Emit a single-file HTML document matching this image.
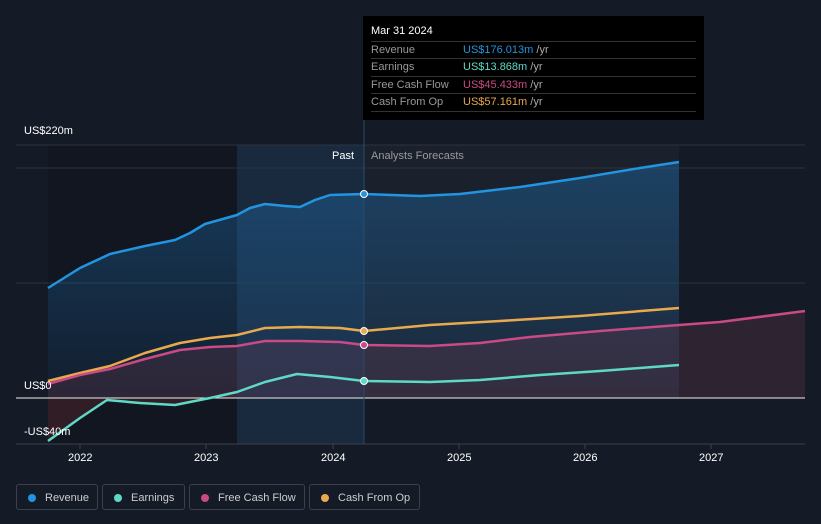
<!DOCTYPE html><html><head><style>
body{margin:0;background:#151b26;font-family:"Liberation Sans",sans-serif;width:821px;height:524px;overflow:hidden;position:relative}
.t{position:absolute;color:#fff;font-size:11px}
.tip{position:absolute;left:363px;top:16px;width:341px;height:104px;background:#000;font-size:11px}
.row{position:absolute;left:8px;width:325px;border-top:1px solid #333;height:17px;line-height:17px;color:#999}
.row span{position:absolute;left:92px}
.row i{font-style:normal;color:#aaa}
.leg{position:absolute;top:484px;height:26px;border:1px solid #3a404c;border-radius:3px;color:#ccc;font-size:11px;line-height:26px;box-sizing:border-box}
.leg b{position:absolute;left:11px;top:9px;width:8px;height:8px;border-radius:50%}
</style></head><body>
<svg width="821" height="524" style="position:absolute;left:0;top:0">
<defs><linearGradient id="bl" x1="0" y1="0" x2="0" y2="1"><stop offset="0" stop-color="#1e6aa8" stop-opacity=".45"/><stop offset="1" stop-color="#1e6aa8" stop-opacity=".1"/></linearGradient></defs>
<rect x="48" y="145" width="189" height="299" fill="#111620"/>
<rect x="237" y="145" width="127" height="299" fill="#1a2a3e"/>
<rect x="364" y="145" width="315" height="254" fill="#1b212c"/>
<line x1="16" y1="145" x2="805" y2="145" stroke="#2c323d"/>
<line x1="16" y1="168" x2="805" y2="168" stroke="#2c323d"/>
<line x1="16" y1="283" x2="805" y2="283" stroke="#2c323d"/>
<path d="M48,288 L80,268 110,254 145,246 175,240 190,233 205,224 237,215 250,208 265,204 285,206 300,207 315,200 330,195 364,194 420,196 460,194 520,187 580,178 640,168 679,162 L679,398 48,398Z" fill="url(#bl)"/>
<path d="M48,384 L80,375 110,369 145,359 180,350 210,347 237,346 265,341 300,341 340,342 364,345 430,346 480,343 530,337 600,331 679,325 720,322 805,311 L805,398 48,398Z" fill="#7a3a55" fill-opacity=".25"/>
<path d="M48,398 L48,441 80,418 107,400 140,403 175,405 210,398 237,392 L237,398Z" fill="#6a2a35" fill-opacity=".35"/>
<line x1="16" y1="398" x2="805" y2="398" stroke="#eee"/>
<line x1="16" y1="444" x2="805" y2="444" stroke="#3a404c"/>
<line x1="364" y1="20" x2="364" y2="444" stroke="#2c4a6a"/>
<path d="M48,288 L80,268 110,254 145,246 175,240 190,233 205,224 237,215 250,208 265,204 285,206 300,207 315,200 330,195 364,194 420,196 460,194 520,187 580,178 640,168 679,162" fill="none" stroke="#2394df" stroke-width="2.5" stroke-linejoin="round"/>
<path d="M48,381 L80,373 110,366 145,353 180,343 210,338 237,335 265,328 300,327 340,328 364,331 430,325 500,321 580,316 679,308" fill="none" stroke="#e9a94f" stroke-width="2.5" stroke-linejoin="round"/>
<path d="M48,384 L80,375 110,369 145,359 180,350 210,347 237,346 265,341 300,341 340,342 364,345 430,346 480,343 530,337 600,331 679,325 720,322 805,311" fill="none" stroke="#c94a84" stroke-width="2.5" stroke-linejoin="round"/>
<path d="M48,441 L80,418 107,400 140,403 175,405 210,398 237,392 265,382 297,374 330,377 364,381 430,382 480,380 540,375 600,371 679,365" fill="none" stroke="#5fd9c6" stroke-width="2.5" stroke-linejoin="round"/>
<circle cx="364" cy="194" r="3.5" fill="#2394df" stroke="#fff"/>
<circle cx="364" cy="331" r="3.5" fill="#e9a94f" stroke="#fff"/>
<circle cx="364" cy="345" r="3.5" fill="#c94a84" stroke="#fff"/>
<circle cx="364" cy="381" r="3.5" fill="#5fd9c6" stroke="#fff"/>
<g stroke="#3a404c"><line x1="80" y1="444" x2="80" y2="449"/><line x1="206" y1="444" x2="206" y2="449"/><line x1="333" y1="444" x2="333" y2="449"/><line x1="459" y1="444" x2="459" y2="449"/><line x1="585" y1="444" x2="585" y2="449"/><line x1="711" y1="444" x2="711" y2="449"/></g>
</svg>
<div class="t" style="left:24px;top:125px">US$220m</div>
<div class="t" style="left:24px;top:380px">US$0</div>
<div class="t" style="left:24px;top:426px">-US$40m</div>
<div class="t" style="left:332px;top:150px">Past</div>
<div class="t" style="left:371px;top:150px;color:#999">Analysts Forecasts</div>
<div class="t" style="left:68px;top:452px">2022</div><div class="t" style="left:194px;top:452px">2023</div><div class="t" style="left:321px;top:452px">2024</div><div class="t" style="left:447px;top:452px">2025</div><div class="t" style="left:573px;top:452px">2026</div><div class="t" style="left:699px;top:452px">2027</div>
<div class="tip"><div style="position:absolute;left:8px;top:9px;color:#fff">Mar 31 2024</div>
<div class="row" style="top:25px">Revenue<span style="color:#2394df">US$176.013m <i>/yr</i></span></div>
<div class="row" style="top:42px">Earnings<span style="color:#5fd9c6">US$13.868m <i>/yr</i></span></div>
<div class="row" style="top:60px">Free Cash Flow<span style="color:#c94a84">US$45.433m <i>/yr</i></span></div>
<div class="row" style="top:77px;border-bottom:1px solid #333">Cash From Op<span style="color:#e9a94f">US$57.161m <i>/yr</i></span></div></div>
<div class="leg" style="left:16px;width:82px"><b style="background:#2394df"></b><span style="margin-left:28px">Revenue</span></div>
<div class="leg" style="left:102px;width:83px"><b style="background:#5fd9c6"></b><span style="margin-left:28px">Earnings</span></div>
<div class="leg" style="left:189px;width:116px"><b style="background:#c94a84"></b><span style="margin-left:28px">Free Cash Flow</span></div>
<div class="leg" style="left:309px;width:111px"><b style="background:#e9a94f"></b><span style="margin-left:28px">Cash From Op</span></div>
</body></html>
